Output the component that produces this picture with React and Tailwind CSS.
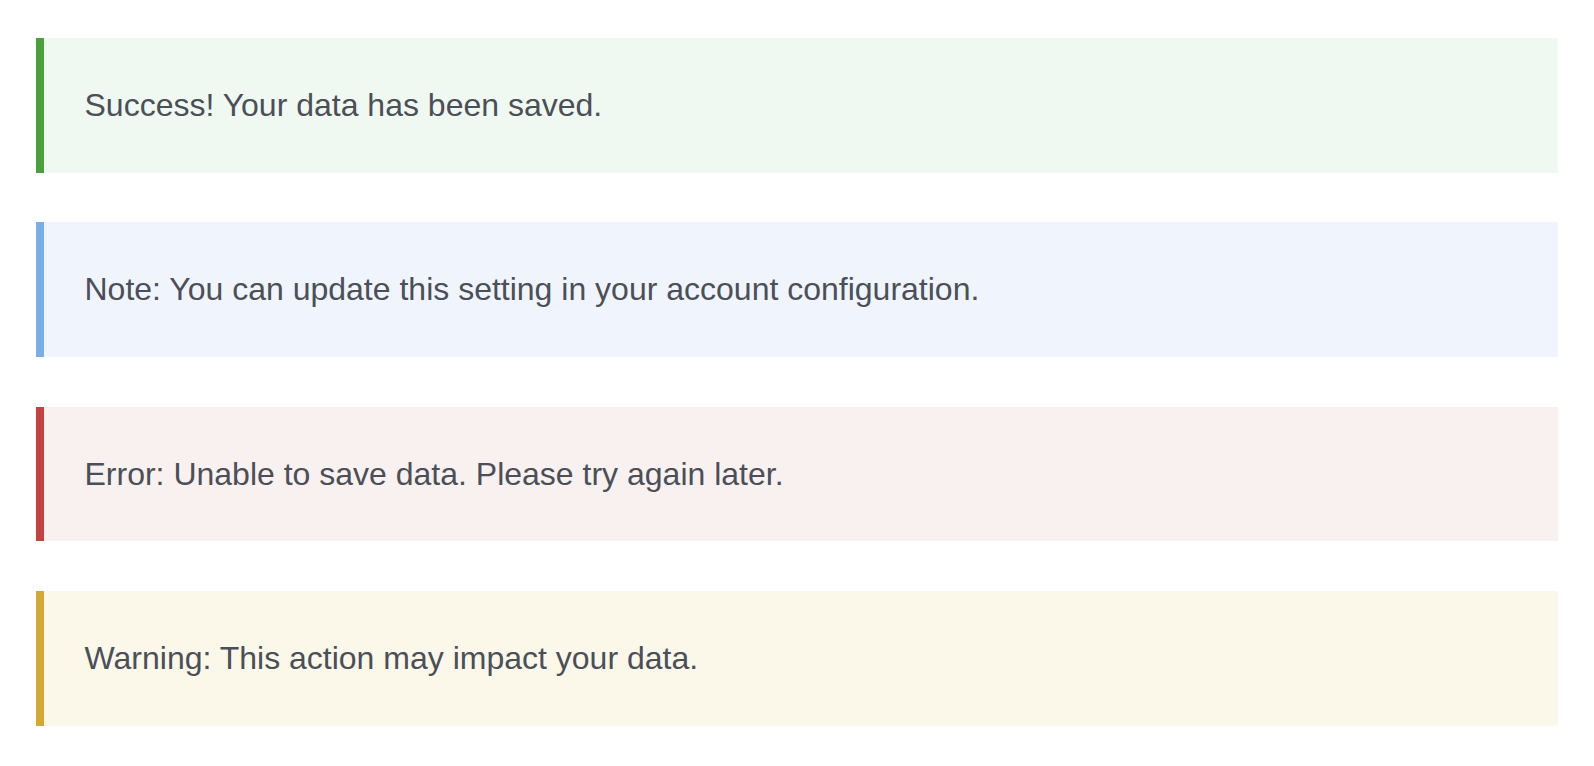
import React from 'react';

const alerts = [
  { text: 'Success! Your data has been saved.', box: 'bg-[#f0f9f1] border-[#4aa03a]' },
  { text: 'Note: You can update this setting in your account configuration.', box: 'bg-[#f0f5fd] border-[#7aaee6]' },
  { text: 'Error: Unable to save data. Please try again later.', box: 'bg-[#f9f1f0] border-[#c4423f]' },
  { text: 'Warning: This action may impact your data.', box: 'bg-[#fbf8ea] border-[#d3a836]' },
];

const App = () => {
  return (
    <div className="min-h-screen bg-white px-9 pt-[38px] font-['Liberation_Sans',Arial,sans-serif]">
      <div className="flex flex-col gap-[49.8px]">
        {alerts.map((a) => (
          <div
            key={a.text}
            className={`flex h-[134.6px] items-center border-l-8 pl-[40.5px] ${a.box}`}
          >
            <p className="-mt-px text-[32px] leading-none text-[#4b4f57]">{a.text}</p>
          </div>
        ))}
      </div>
    </div>
  );
};

export default App;
